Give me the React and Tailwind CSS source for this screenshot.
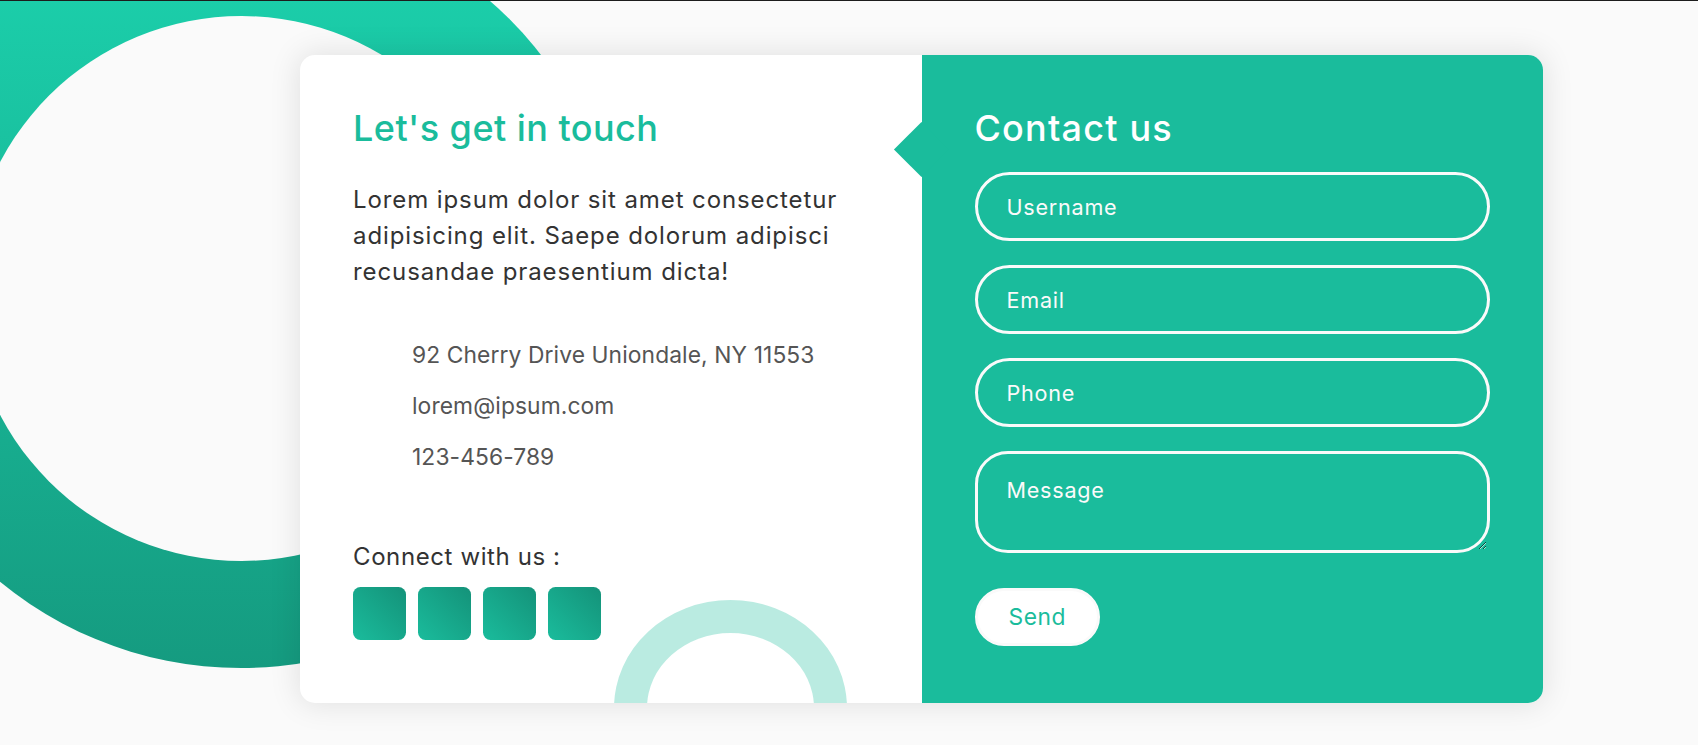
import React from "react";

const fields = ["Username", "Email", "Phone"];
const infos = ["92 Cherry Drive Uniondale, NY 11553", "lorem@ipsum.com", "123-456-789"];

export default function App() {
  return (
    <div className="relative min-h-screen w-full overflow-hidden bg-[#fafafa] font-['Inter',sans-serif]">
      <div className="relative z-20 h-px bg-[#1c1c1c]" />

      {/* big ring behind the card */}
      <div className="absolute left-[-139px] top-[-92px] h-[760px] w-[760px] rounded-full bg-[linear-gradient(to_bottom,#1cd4af,#159b80)]">
        <div className="absolute left-[107.5px] top-[107.5px] h-[545px] w-[545px] rounded-full bg-[#fafafa]" />
      </div>

      <div className="relative z-10 pl-[300px] pt-[54px]">
        <div className="grid w-[1243px] grid-cols-2 overflow-hidden rounded-[15px] bg-white shadow-[0_0_30px_1.5px_rgba(0,0,0,0.1)]">
          {/* info side */}
          <div className="relative px-[53px] pt-[55px]">
            <h3 className="text-[36px] font-medium leading-none tracking-[0.45px] text-[#1abc9c]">Let's get in touch</h3>
            <p className="mt-[36px] text-[24px] leading-[36px] tracking-[0.9px] text-[#333]">
              Lorem ipsum dolor sit amet consectetur
              <br />
              adipisicing elit. Saepe dolorum adipisci
              <br />
              recusandae praesentium dicta!
            </p>
            <div className="mt-[48px] flex flex-col gap-[17px] pl-[59px]">
              {infos.map((t) => (
                <p key={t} className="h-[34px] text-[22.8px] leading-[34px] tracking-[0.1px] text-[#555]">
                  {t}
                </p>
              ))}
            </div>
            <p className="mt-[65px] text-[24px] leading-[36px] tracking-[0.6px] text-[#333]">Connect with us :</p>
            <div className="mt-[12px] flex gap-[12.5px]">
              {[0, 1, 2, 3].map((i) => (
                <a
                  key={i}
                  href="#"
                  className="h-[52.5px] w-[52.5px] rounded-[7.5px] bg-[linear-gradient(45deg,#1abc9c,#149279)]"
                />
              ))}
            </div>
            <div className="absolute bottom-[-113px] right-[75px] h-[216px] w-[233px] rounded-[50%] border-[33px] border-[#1abc9c] opacity-30" />
          </div>

          {/* form side */}
          <div className="relative bg-[#1abc9c]">
            <span className="absolute left-[-19.5px] top-[75px] h-[39px] w-[39px] rotate-45 bg-[#1abc9c]" />
            <form className="relative px-[53px] pb-[57px] pt-[55px]" onSubmit={(e) => e.preventDefault()}>
              <h3 className="text-[36px] font-medium leading-none tracking-[1.2px] text-white">Contact us</h3>
              <div className="mt-[26px] flex flex-col gap-[24px]">
                {fields.map((f) => (
                  <input
                    key={f}
                    placeholder={f}
                    className="h-[69px] w-full rounded-full border-[3px] border-[#fafafa] bg-transparent px-[29px] text-[21.6px] tracking-[0.75px] text-white outline-none placeholder:text-[#fafafa]"
                  />
                ))}
                <textarea
                  placeholder="Message"
                  className="block h-[102px] w-full rounded-[33px] border-[3px] border-[#fafafa] bg-transparent px-[29px] pt-[20px] text-[21.6px] leading-[32px] tracking-[0.75px] text-white outline-none placeholder:text-[#fafafa]"
                />
              </div>
              <button
                type="submit"
                className="mt-[35px] h-[58px] rounded-full border-[3px] border-[#fafafa] bg-white px-[31px] text-[22.8px] leading-none tracking-[0.5px] text-[#1abc9c]"
              >
                Send
              </button>
            </form>
          </div>
        </div>
      </div>
    </div>
  );
}
